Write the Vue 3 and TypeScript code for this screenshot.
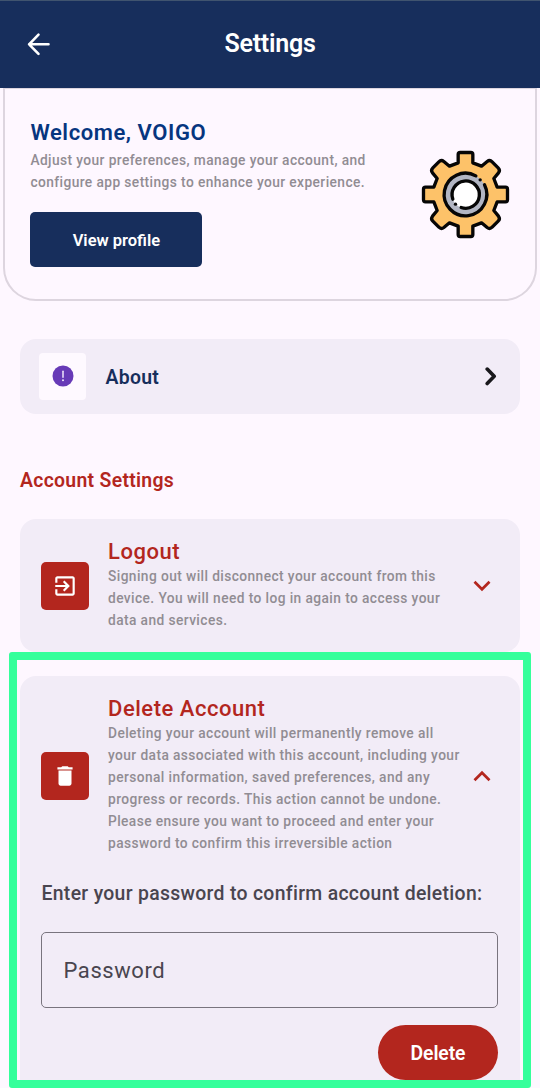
<script setup lang="ts">
import { ref } from 'vue'

type Point = [number, number]

const aboutLabel = 'About'
const password = ref('')

const logoutLines: string[] = [
  'Signing out will disconnect your account from this',
  'device. You will need to log in again to access your',
  'data and services.',
]

const deleteLines: string[] = [
  'Deleting your account will permanently remove all',
  'your data associated with this account, including your',
  'personal information, saved preferences, and any',
  'progress or records. This action cannot be undone.',
  'Please ensure you want to proceed and enter your',
  'password to confirm this irreversible action',
]

// One quarter of the cog outline, repeated four times around the centre.
const quarter: [string, Point[]][] = [
  ['L', [[-22, -120]]],
  ['Q', [[-22, -126], [-16, -126]]],
  ['L', [[16, -126]]],
  ['Q', [[22, -126], [22, -120]]],
  ['L', [[22, -95]]],
  ['L', [[48, -85]]],
  ['L', [[65, -99]]],
  ['Q', [[73, -105], [80, -98]]],
  ['L', [[98, -80]]],
  ['Q', [[105, -73], [99, -65]]],
  ['L', [[85, -48]]],
  ['L', [[95, -22]]],
]

function turn([x, y]: Point, times: number): Point {
  let p: Point = [x, y]
  for (let i = 0; i < times; i++) p = [-p[1], p[0]]
  return p
}

const cogPath =
  'M-22 -95' +
  [0, 1, 2, 3]
    .map((n) => quarter.map(([c, pts]) => c + pts.map((p) => turn(p, n).join(' ')).join(' ')).join(''))
    .join('') +
  'Z'
</script>

<template>
  <div class="screen">
    <header class="bar">
      <svg class="back" viewBox="0 0 24 24" fill="none" stroke="#fff" stroke-width="2.6" stroke-linecap="round" stroke-linejoin="round">
        <path d="M22.5 12.3H3.1M12.5 2.7L3.1 12.3l9.4 9.6" />
      </svg>
      <h1>Settings</h1>
    </header>

    <section class="welcome">
      <div class="intro">
        <h2>Welcome, VOIGO</h2>
        <p class="desc">Adjust your preferences, manage your account, and<br />configure app settings to enhance your experience.</p>
        <button class="profile">View profile</button>
      </div>
      <svg class="cog" viewBox="-132 -132 264 264" fill="none" stroke="#060606" stroke-width="10" stroke-linejoin="round" stroke-linecap="round">
        <g transform="translate(-1.5 -1.5)">
          <path :d="cogPath" fill="#fdc269" />
          <circle r="64" fill="#b2b6c3" stroke="none" />
          <path d="M57 -29A64 64 0 1 1 31 -56" />
          <circle r="41" fill="#fff" stroke="none" />
          <path d="M-38 14A41 41 0 1 1 -13 39" />
          <circle cx="44" cy="-44" r="5" fill="#060606" stroke="none" />
          <circle cx="-30" cy="29" r="5" fill="#060606" stroke="none" />
        </g>
      </svg>
    </section>

    <section class="about">
      <span class="about-icon">
        <svg viewBox="0 0 22 22">
          <circle cx="11" cy="11" r="10.5" fill="#673ab7" />
          <path d="M11 6.2v6" stroke="#efe7fb" stroke-width="1.5" stroke-linecap="round" />
          <circle cx="11" cy="15.2" r="1" fill="#efe7fb" />
        </svg>
      </span>
      <span class="about-label">{{ aboutLabel }}</span>
      <svg class="about-arrow" viewBox="0 0 12 20" fill="none" stroke="#19181c" stroke-width="3.6" stroke-linecap="round" stroke-linejoin="round">
        <path d="M2.2 3.1L9.2 10.3l-7 7.2" />
      </svg>
    </section>

    <h3 class="section-title">Account Settings</h3>

    <section class="card logout">
      <div class="row">
        <span class="tile">
          <svg viewBox="0 0 24 24" fill="#fff">
            <path d="M10.09 15.59L11.5 17l5-5-5-5-1.41 1.41L12.67 11H3v2h9.67l-2.58 2.59zM19 3H5c-1.11 0-2 .9-2 2v4h2V5h14v14H5v-4H3v4c0 1.1.89 2 2 2h14c1.1 0 2-.9 2-2V5c0-1.1-.9-2-2-2z" />
          </svg>
        </span>
        <div class="text">
          <h4>Logout</h4>
          <p class="desc"><span v-for="line in logoutLines" :key="line">{{ line }}</span></p>
        </div>
        <svg class="chevron" viewBox="0 0 18 12" fill="none" stroke="#b3261e" stroke-width="2.7">
          <path d="M1.5 1.8L9 9.3l7.5-7.5" />
        </svg>
      </div>
    </section>

    <section class="card delete">
      <div class="row">
        <span class="tile">
          <svg viewBox="0 0 24 24" fill="#fff">
            <path d="M6 19c0 1.1.9 2 2 2h8c1.1 0 2-.9 2-2V7H6v12zM19 4h-3.5l-1-1h-5l-1 1H5v2h14V4z" />
          </svg>
        </span>
        <div class="text">
          <h4>Delete Account</h4>
          <p class="desc"><span v-for="line in deleteLines" :key="line">{{ line }}</span></p>
        </div>
        <svg class="chevron" viewBox="0 0 18 12" fill="none" stroke="#b3261e" stroke-width="2.7">
          <path d="M1.5 10.2L9 2.7l7.5 7.5" />
        </svg>
      </div>
      <label class="prompt" for="password">Enter your password to confirm account deletion:</label>
      <input id="password" v-model="password" type="password" placeholder="Password" />
      <button class="confirm">Delete</button>
    </section>

    <div class="highlight"></div>
  </div>
</template>

<style>
html,
body {
  background: #fef7ff;
}
</style>

<style scoped>
* {
  box-sizing: border-box;
  margin: 0;
}
.screen {
  position: relative;
  width: 540px;
  height: 1088px;
  overflow: hidden;
  background: #fef7ff;
  font-family: Roboto, sans-serif;
  display: flex;
  flex-direction: column;
}
svg {
  display: block;
  flex: none;
}
button {
  border: 0;
  padding: 0;
  font-family: inherit;
  color: #fff;
}
.bar {
  height: 88px;
  flex: none;
  background: #172e5c;
  border-top: 1px solid #40546f;
  padding-bottom: 1px;
  display: grid;
  grid-template-columns: 76px 1fr 76px;
  align-items: center;
}
.back {
  width: 24px;
  height: 24px;
  margin-left: 26px;
}
h1 {
  text-align: center;
  font-size: 25px;
  line-height: 30px;
  font-weight: 600;
  letter-spacing: -0.25px;
  color: #fff;
}
.welcome {
  flex: none;
  height: 213px;
  margin: 0 3px;
  border: 2px solid #ddd5df;
  border-top-width: 1px;
  border-radius: 0 0 33px 33px;
  padding: 30px 25.5px 0 25.4px;
  display: flex;
  justify-content: space-between;
}
h2 {
  font-size: 22px;
  line-height: 28px;
  font-weight: 600;
  letter-spacing: 0.57px;
  color: #06357f;
}
.desc {
  font-size: 13.75px;
  line-height: 22px;
  font-weight: 500;
  letter-spacing: 0.41px;
  color: #918c93;
  white-space: nowrap;
}
.intro .desc {
  margin-top: 2px;
}
.desc span {
  display: block;
}
.profile {
  display: block;
  margin-top: 19px;
  width: 172px;
  height: 55px;
  padding-top: 2px;
  border-radius: 5px;
  background: #172e5c;
  font-size: 16.5px;
  font-weight: 600;
}
.cog {
  width: 88px;
  height: 88px;
  margin-top: 31.6px;
  overflow: visible;
}
.about {
  flex: none;
  height: 74.5px;
  margin: 38px 20px 0;
  padding: 0 23px 0 19px;
  border-radius: 16px;
  background: #f2ecf7;
  display: flex;
  align-items: center;
}
.about-icon {
  width: 47px;
  height: 47px;
  border-radius: 4px;
  background: #fef9ff;
  display: grid;
  place-items: center;
}
.about-icon svg {
  width: 22px;
  height: 22px;
}
.about-label {
  margin-left: 19.5px;
  padding-top: 1.5px;
  flex: 1;
  font-size: 19.4px;
  font-weight: 600;
  letter-spacing: 0.3px;
  color: #172e5c;
}
.about-arrow {
  width: 12px;
  height: 20px;
}
.section-title {
  flex: none;
  margin: 54.5px 20px 0;
  font-size: 19.4px;
  line-height: 26px;
  font-weight: 600;
  letter-spacing: 0.3px;
  color: #b3261e;
}
.card {
  flex: none;
  margin: 0 20px;
  border-radius: 16px;
  background: #f2ecf7;
  padding: 20px 22px 0 21px;
}
.logout {
  margin-top: 25px;
  height: 133px;
}
.delete {
  margin-top: 24px;
  height: 430px;
  display: flex;
  flex-direction: column;
}
.row {
  display: flex;
  align-items: center;
}
.tile {
  flex: none;
  width: 48px;
  height: 48px;
  margin-top: 1px;
  border-radius: 5px;
  background: #b3261e;
  display: grid;
  place-items: center;
}
.tile svg {
  width: 26px;
  height: 26px;
}
.text {
  margin-left: 19px;
  flex: 1;
  min-width: 0;
}
h4 {
  font-size: 22px;
  line-height: 26px;
  font-weight: 500;
  letter-spacing: 0.53px;
  color: #b3261e;
}
.chevron {
  width: 18px;
  height: 12px;
  margin: 2px 7px 0 0;
}
.prompt {
  margin: 27px 0 0 0.5px;
  font-size: 19.4px;
  line-height: 26px;
  font-weight: 500;
  letter-spacing: 0.31px;
  color: #49454f;
  white-space: nowrap;
}
input {
  margin-top: 25px;
  width: 457px;
  height: 76px;
  flex: none;
  border: 1.4px solid #79747e;
  border-radius: 5px;
  background: transparent;
  padding: 0 21.5px;
  font-family: inherit;
  font-size: 22px;
  letter-spacing: 0.58px;
  color: #49454f;
  outline: none;
}
input::placeholder {
  color: #49454f;
  opacity: 1;
}
.confirm {
  align-self: flex-end;
  flex: none;
  margin-top: 17px;
  width: 120px;
  height: 55px;
  padding-top: 1px;
  border-radius: 28px;
  background: #b3261e;
  font-size: 19.4px;
  letter-spacing: -0.1px;
  font-weight: 600;
}
.highlight {
  position: absolute;
  left: 9px;
  top: 652px;
  width: 522px;
  height: 436px;
  border: 8px solid #35ff9b;
  border-radius: 3px;
  pointer-events: none;
}
</style>
